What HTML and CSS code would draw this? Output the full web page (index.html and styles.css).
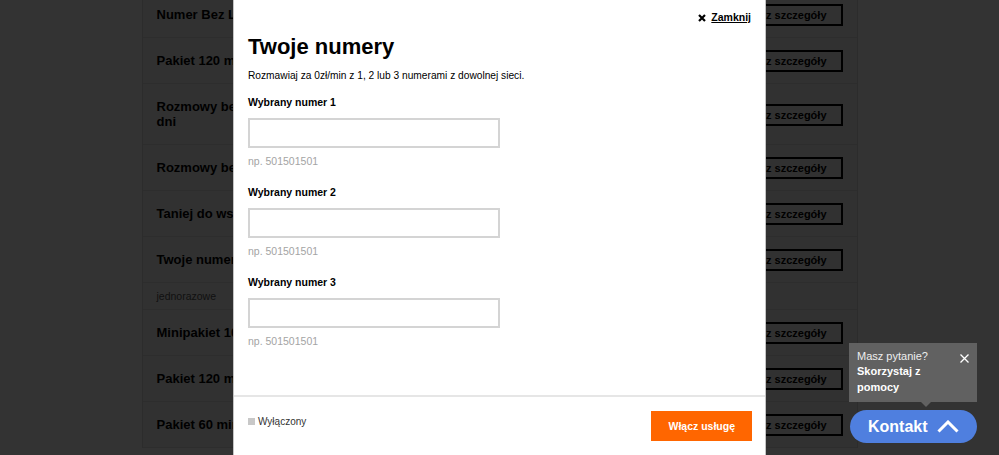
FILE: index.html
```html
<!DOCTYPE html>
<html lang="pl">
<head>
    <meta charset="UTF-8">
    <meta name="viewport" content="width=device-width, initial-scale=1.0">
    <title>Twoje numery</title>
    <link rel="stylesheet" href="styles.css">
</head>
<body>

<div class="offer-list">
    <div class="offer">
        <span class="offer-name">Numer Bez Limitu</span>
        <a class="details-btn" href="#">Zobacz szczegóły</a>
    </div>
    <div class="offer">
        <span class="offer-name">Pakiet 120 minut do wszystkich</span>
        <a class="details-btn" href="#">Zobacz szczegóły</a>
    </div>
    <div class="offer">
        <span class="offer-name">Rozmowy bez limitu do wszystkich sieci przez 30<br>dni</span>
        <a class="details-btn" href="#">Zobacz szczegóły</a>
    </div>
    <div class="offer">
        <span class="offer-name">Rozmowy bez limitu w Orange</span>
        <a class="details-btn" href="#">Zobacz szczegóły</a>
    </div>
    <div class="offer">
        <span class="offer-name">Taniej do wszystkich sieci</span>
        <a class="details-btn" href="#">Zobacz szczegóły</a>
    </div>
    <div class="offer">
        <span class="offer-name">Twoje numery</span>
        <a class="details-btn" href="#">Zobacz szczegóły</a>
    </div>
    <div class="offer offer-group">jednorazowe</div>
    <div class="offer">
        <span class="offer-name">Minipakiet 100 minut</span>
        <a class="details-btn" href="#">Zobacz szczegóły</a>
    </div>
    <div class="offer">
        <span class="offer-name">Pakiet 120 minut</span>
        <a class="details-btn" href="#">Zobacz szczegóły</a>
    </div>
    <div class="offer">
        <span class="offer-name">Pakiet 60 minut</span>
        <a class="details-btn" href="#">Zobacz szczegóły</a>
    </div>
</div>

<div class="overlay"></div>

<div class="modal">
    <div class="modal-body">
        <div class="modal-top">
            <a class="close-link" href="#">
                <svg width="8" height="8" viewBox="0 0 8 8"><path d="M1 1L7 7M7 1L1 7" stroke="#000" stroke-width="2.2"/></svg>
                Zamknij
            </a>
        </div>
        <h1>Twoje numery</h1>
        <p class="lead">Rozmawiaj za 0zł/min z 1, 2 lub 3 numerami z dowolnej sieci.</p>

        <div class="field">
            <label for="num1">Wybrany numer 1</label>
            <input id="num1" type="text">
            <div class="hint">np. 501501501</div>
        </div>
        <div class="field">
            <label for="num2">Wybrany numer 2</label>
            <input id="num2" type="text">
            <div class="hint">np. 501501501</div>
        </div>
        <div class="field">
            <label for="num3">Wybrany numer 3</label>
            <input id="num3" type="text">
            <div class="hint">np. 501501501</div>
        </div>
    </div>

    <div class="modal-footer">
        <span class="status"><i class="status-box"></i>Wyłączony</span>
        <button class="btn-orange">Włącz usługę</button>
    </div>
</div>

<div class="chat">
    <div class="chat-tip">
        <span class="chat-close">
            <svg width="9" height="9" viewBox="0 0 9 9"><path d="M0.5 0.5L8.5 8.5M8.5 0.5L0.5 8.5" stroke="#fff" stroke-width="1.3"/></svg>
        </span>
        <div class="chat-question">Masz pytanie?</div>
        <div class="chat-help">Skorzystaj z<br>pomocy</div>
    </div>
    <button class="chat-btn">
        Kontakt
        <svg width="22" height="13" viewBox="0 0 22 13"><polyline points="1.5,11.5 11,2 20.5,11.5" fill="none" stroke="#fff" stroke-width="3"/></svg>
    </button>
</div>

</body>
</html>
```

FILE: styles.css
```css
html, body {
    overflow: hidden;
}

body {
    margin: 0;
    background-color: #ffffff;
    font-family: 'Liberation Sans', Arial, sans-serif;
    color: #000;
}

/* lista ofert pod spodem */
.offer-list {
    width: 716px;
    margin: -8px auto 0;
    box-sizing: border-box;
    background-color: #f4f4f4;
    border-left: 1px solid #dcdcdc;
    border-right: 1px solid #dcdcdc;
}

.offer {
    display: flex;
    justify-content: space-between;
    align-items: center;
    padding: 15px 14px;
    border-bottom: 1px solid #e2e2e2;
}

.offer-name {
    font-size: 13px;
    font-weight: bold;
    line-height: 15px;
}

.offer-group {
    padding: 7px 14px 6px;
    font-size: 10.5px;
    line-height: 13px;
    color: #555;
}

.details-btn {
    margin: -3px 0 -4px;
    padding: 2px 14px;
    border: 2px solid #000;
    font-size: 11px;
    font-weight: bold;
    line-height: 14px;
    color: #000;
    text-decoration: none;
}

.overlay {
    position: fixed;
    inset: 0;
    background-color: rgba(0, 0, 0, 0.8);
}

/* okno modalne */
.modal {
    position: absolute;
    top: 0;
    left: calc(50% - 266.5px);
    width: 533px;
    box-sizing: border-box;
    background-color: #fff;
    border-left: 1px solid #c4c4c4;
    border-right: 1px solid #c4c4c4;
}

.modal-body {
    padding: 11px 14px 47px;
}

.modal-top {
    display: flex;
    justify-content: flex-end;
}

.close-link {
    display: flex;
    align-items: center;
    gap: 5px;
    font-size: 10.5px;
    font-weight: bold;
    line-height: 13px;
    color: #000;
}

.modal h1 {
    margin: 10px 0 0;
    font-size: 22px;
    line-height: 26px;
}

.lead {
    margin: 9px 0 0;
    font-size: 10.2px;
    line-height: 13px;
}

.field {
    margin-top: 14px;
}

.field + .field {
    margin-top: 18px;
}

.field label {
    display: block;
    font-size: 10.5px;
    font-weight: bold;
    line-height: 13px;
}

.field input {
    display: block;
    width: 252px;
    height: 30px;
    margin-top: 9px;
    box-sizing: border-box;
    border: 2px solid #d4d4d4;
    outline: none;
}

.hint {
    margin-top: 7px;
    font-size: 10.5px;
    line-height: 13px;
    color: #a4a4a4;
}

.modal-footer {
    display: flex;
    justify-content: space-between;
    align-items: center;
    padding: 14px 13px 14px 14px;
    border-top: 2px solid #e6e6e6;
}

.status {
    display: flex;
    align-items: center;
    gap: 3px;
    margin-bottom: 9px;
    font-size: 10px;
    line-height: 13px;
    color: #333;
}

.status-box {
    width: 7px;
    height: 7px;
    background-color: #c8c8c8;
}

.btn-orange {
    height: 30px;
    padding: 0 17px;
    border: none;
    background-color: #ff6600;
    color: #fff;
    font-family: inherit;
    font-size: 10.5px;
    font-weight: bold;
}

/* widget kontaktu */
.chat {
    position: fixed;
    right: 22px;
    bottom: 12px;
    width: 128px;
}

.chat-tip {
    position: relative;
    margin-bottom: 8px;
    padding: 6px 8px 7px;
    background-color: #616161;
    color: #fff;
    font-size: 11px;
    line-height: 15.5px;
}

.chat-tip::after {
    content: '';
    position: absolute;
    left: 72px;
    bottom: -5px;
    border-left: 5px solid transparent;
    border-right: 5px solid transparent;
    border-top: 5px solid #616161;
}

.chat-close {
    position: absolute;
    top: 11px;
    right: 8px;
    line-height: 0;
}

.chat-question {
    color: #eee;
}

.chat-help {
    font-weight: bold;
}

.chat-btn {
    display: flex;
    align-items: center;
    gap: 9px;
    width: 127px;
    height: 33px;
    margin-left: 1px;
    padding: 0 0 0 18px;
    border: none;
    border-radius: 17px;
    background-color: #4f7fdf;
    color: #fff;
    font-family: inherit;
    font-size: 16px;
    font-weight: bold;
}
```
